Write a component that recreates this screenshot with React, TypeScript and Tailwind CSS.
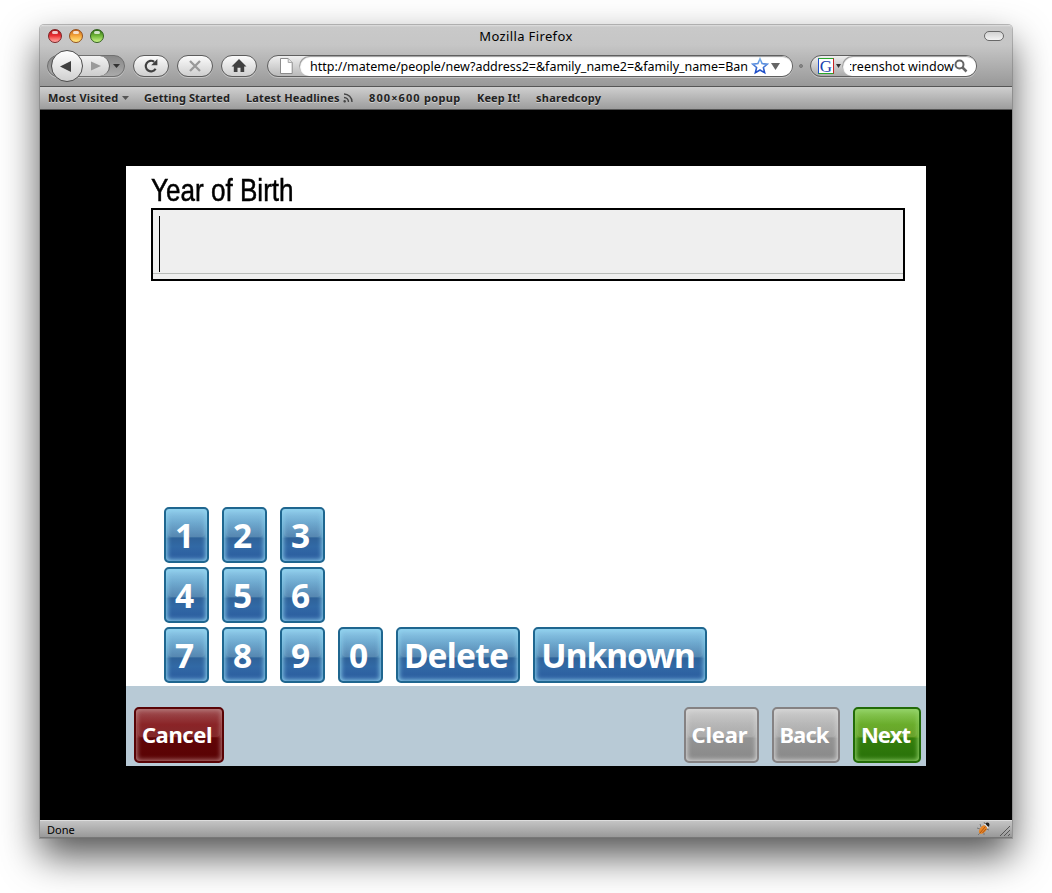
import type { ReactNode } from "react";

const tones = {
  blue: "border-[#1f668f] bg-[linear-gradient(#93cdeb_0%,#6aa8cf_25%,#4379a8_54%,#2f6299_56%,#3169a5_72%,#2b5a9f_100%)] shadow-[inset_0_0_5px_1px_#8fd3ee]",
  red: "border-[#590406] bg-[linear-gradient(#a25558_0%,#84191c_30%,#741113_54%,#600507_56%,#590304_100%)] shadow-[inset_0_0_5px_1px_#b98081]",
  gray: "border-[#858283] bg-[linear-gradient(#cfcfcf_0%,#b3b3b3_30%,#a0a0a0_54%,#939393_56%,#898989_100%)] shadow-[inset_0_0_5px_1px_#d8d8d8]",
  green: "border-[#226b08] bg-[linear-gradient(#91d063_0%,#62a820_30%,#579614_54%,#347e0c_56%,#287009_100%)] shadow-[inset_0_0_5px_1px_#94d36c]",
};

function Key({ children, tone = "blue", className }: { children: ReactNode; tone?: keyof typeof tones; className: string }) {
  return (
    <button
      className={`relative flex h-14 shrink-0 items-center justify-center rounded-[5px] border-2 font-['Noto_Sans','Open_Sans',sans-serif] font-bold whitespace-nowrap text-white ${tones[tone]} ${className}`}
    >
      <span className="absolute inset-x-[2px] top-[3px] h-[25px] rounded-[4px] bg-linear-to-b from-white/0 to-white/10" />
      <span className="relative leading-none">{children}</span>
    </button>
  );
}

function Light({ className }: { className: string }) {
  return (
    <span className={`relative size-[14px] rounded-full border ${className}`}>
      <span className="absolute top-px left-[3px] h-[3px] w-[6px] rounded-full bg-white/75 blur-[0.5px]" />
    </span>
  );
}

function ToolButton({ children }: { children: ReactNode }) {
  return (
    <button className="flex h-[22px] w-9 shrink-0 items-center justify-center rounded-full border border-[#5c5c5c] bg-linear-to-b from-[#fbfbfb] to-[#cfcfcf] shadow-[0_1px_0_#c4c4c4]">
      {children}
    </button>
  );
}

function Chrome() {
  return (
    <header className="h-[61px] shrink-0 bg-[linear-gradient(#e0e0e0_0px,#c9c9c9_2px,#c6c6c6_20px,#989898_61px)]">
      <div className="flex h-[22px] items-center pr-2 pl-2">
        <div className="flex w-[140px] gap-[7px]">
          <Light className="border-[#7d2224] bg-linear-to-b from-[#a81318] via-[#ee3238] to-[#ffa6a5]" />
          <Light className="border-[#93501c] bg-linear-to-b from-[#c8651b] via-[#f6a93c] to-[#ffeb83]" />
          <Light className="border-[#31601d] bg-linear-to-b from-[#327016] via-[#73b93b] to-[#cbf589]" />
        </div>
        <h1 className="flex-1 pt-[2px] text-center text-[13px] tracking-[0.36px]">Mozilla Firefox</h1>
        <div className="flex w-[140px] justify-end">
          <span className="h-[10px] w-5 rounded-full border border-[#686868] bg-linear-to-b from-[#d2d2d2] to-[#f3f3f3]" />
        </div>
      </div>
      <div className="flex h-[38px] items-center pl-[7px]">
        <div className="relative mr-2 flex h-[22px] w-[78px] shrink-0 items-center rounded-full border border-[#707070] bg-linear-to-b from-[#888] to-[#aaa] shadow-[0_1px_0_#c4c4c4]">
          <span className="ml-6 flex h-full w-[38px] items-center justify-center rounded-r-full border-r border-[#5c5c5c] bg-linear-to-b from-[#f2f2f2] to-[#cdcdcd] pl-[11px]">
            <svg width="10" height="10" viewBox="0 0 10 10"><path d="M0 0.5 10 5 0 9.5Z" fill="#9a9a9a" /></svg>
          </span>
          <svg className="ml-[3px]" width="7" height="4" viewBox="0 0 7 4"><path d="M0 0h7L3.5 4Z" fill="#333" /></svg>
          <span className="absolute top-[-6px] left-[3px] flex size-8 items-center justify-center rounded-full border border-[#4d4d4d] bg-linear-to-b from-white to-[#d0d0d0] pr-1">
            <svg width="11" height="11" viewBox="0 0 11 11"><path d="M11 0v11L0 5.5Z" fill="#3f3f3f" /></svg>
          </span>
        </div>
        <div className="mr-[10px] flex gap-2">
          <ToolButton>
            <svg width="16" height="16" viewBox="0 0 16 16" fill="none">
              <path d="M12.6 10.8A5.3 5.3 0 1 1 11.2 3.8" stroke="#404040" strokeWidth="2.2" />
              <path d="M14.4 1v6.2H8.2Z" fill="#404040" />
            </svg>
          </ToolButton>
          <ToolButton>
            <svg width="12" height="12" viewBox="0 0 12 12"><path d="m1 1 10 10M11 1 1 11" stroke="#999" strokeWidth="2.3" /></svg>
          </ToolButton>
          <ToolButton>
            <svg width="16" height="14" viewBox="0 0 16 14"><path d="M8 0 0.5 7.5h2.3V13h3.7V8.7h3V13h3.7V7.5h2.3Z" fill="#404040" /></svg>
          </ToolButton>
        </div>
        <div className="flex h-[22px] w-[526px] shrink-0 items-center rounded-full border border-[#5f5f5f] bg-linear-to-b from-[#efefef] to-[#b9b9b9] shadow-[0_1px_0_#c4c4c4]">
          <svg className="mr-[6px] ml-3" width="13" height="16" viewBox="0 0 13 16"><path d="M.5.5h7.7l4 4v11H.5Z" fill="#fff" stroke="#8c8c8c" /><path d="M8.2.5v4h4" fill="#e4e4e4" stroke="#a9a9a9" /></svg>
          <div className="flex h-full flex-1 items-center rounded-full bg-white pl-[11px] shadow-[inset_1px_1px_1px_#999]">
            <span className="w-[441px] pt-[2px] text-[12.5px] tracking-[-0.01px] whitespace-nowrap">http://mateme/people/new?address2=&amp;family_name2=&amp;family_name=Ban</span>
            <svg className="shrink-0" width="18" height="18" viewBox="0 0 18 18">
              <defs><linearGradient id="star" x2="0" y2="1"><stop stopColor="#7db4ea" /><stop offset="1" stopColor="#1746c5" /></linearGradient></defs>
              <path d="m9 1.8 2.1 4.8 5.3.5-4 3.4 1.2 5.2L9 13l-4.6 2.7 1.2-5.2-4-3.4 5.3-.5Z" fill="#fff" stroke="url(#star)" strokeWidth="1.6" />
            </svg>
            <svg className="ml-[2px] shrink-0" width="9" height="7" viewBox="0 0 9 7"><path d="M0 0h9L4.5 7Z" fill="#666" /></svg>
          </div>
        </div>
        <span className="mr-[7px] ml-[6px] size-[4px] shrink-0 rounded-full border border-[#777] bg-[#888]" />
        <div className="flex h-[22px] w-[167px] shrink-0 items-center rounded-full border border-[#5f5f5f] bg-linear-to-b from-[#efefef] to-[#aaa] shadow-[0_1px_0_#c4c4c4]">
          <span className="ml-[7px] flex h-4 w-4 shrink-0 items-center justify-center border border-t-[#2aa52a] border-r-[#c62222] border-b-[#2aa52a] border-l-[#1e4fd0] bg-white font-['Liberation_Serif',serif] text-[17px] leading-none text-[#1b3fae]">G</span>
          <svg className="mr-px ml-[2px] shrink-0" width="5" height="4" viewBox="0 0 5 4"><path d="M0 0h5L2.5 4Z" fill="#333" /></svg>
          <div className="flex h-full flex-1 items-center rounded-full bg-white pl-2 shadow-[inset_1px_1px_1px_#999]">
            <span className="flex w-[104px] justify-end overflow-hidden pt-[2px] text-[12.5px] tracking-[0.05px] whitespace-nowrap">screenshot window</span>
            <svg className="shrink-0" width="14" height="14" viewBox="0 0 14 14" fill="none"><circle cx="5.5" cy="5.5" r="4" stroke="#666" strokeWidth="2" /><path d="m8.5 8.5 4 4" stroke="#666" strokeWidth="2.5" /></svg>
          </div>
        </div>
      </div>
    </header>
  );
}

function Bookmarks() {
  return (
    <nav className="flex h-6 shrink-0 items-center border-t border-b border-t-[#555] border-b-[#555] bg-linear-to-b from-[#cfcfcf] to-[#9d9d9d] pl-2 text-[11px] font-bold whitespace-nowrap text-[#222] [text-shadow:0_1px_0_#d0d0d0]">
      <span className="w-[74px] tracking-[0.2px]">Most Visited</span>
      <svg className="mr-[15px]" width="7" height="4" viewBox="0 0 7 4"><path d="M0 0h7L3.5 4Z" fill="#555" /></svg>
      <span className="w-[102px] tracking-[0.07px]">Getting Started</span>
      <span className="w-[97px] tracking-[0.13px]">Latest Headlines</span>
      <svg className="mr-4" width="10" height="10" viewBox="0 0 10 10" fill="none" stroke="#444" strokeWidth="1.4"><path d="M1 1a8 8 0 0 1 8 8M1 4.5A4.5 4.5 0 0 1 5.5 9" /><circle cx="1.7" cy="8.3" r=".6" /></svg>
      <span className="w-[108px]"><span className="tracking-[1.1px]">800×600</span><span className="tracking-[0.35px]"> popup</span></span>
      <span className="w-[59px] tracking-[0.1px]">Keep It!</span>
      <span className="tracking-[0.23px]">sharedcopy</span>
    </nav>
  );
}

function Keypad() {
  return (
    <div className="flex flex-col gap-1 pl-[38px] text-[33.5px]">
      <div className="flex gap-[13px]">
        {["1", "2", "3"].map((n) => <Key key={n} className="w-[45px] pt-[2px] pr-[4px]">{n}</Key>)}
      </div>
      <div className="flex gap-[13px]">
        {["4", "5", "6"].map((n) => <Key key={n} className="w-[45px] pt-[2px] pr-[4px]">{n}</Key>)}
      </div>
      <div className="flex gap-[13px]">
        {["7", "8", "9", "0"].map((n) => <Key key={n} className="w-[45px] pt-[2px] pr-[4px]">{n}</Key>)}
        <Key className="w-[124px] pt-[2px] pr-[4px] tracking-[-0.8px]">Delete</Key>
        <Key className="w-[174px] pt-[2px] pr-[4px] tracking-[-1px]">Unknown</Key>
      </div>
    </div>
  );
}

export default function App() {
  return (
    <div className="h-[893px] w-[1052px] overflow-hidden bg-white pt-[25px] pl-10 font-['Noto_Sans','Open_Sans',sans-serif] text-black">
      <div className="flex h-[813px] w-[972px] flex-col overflow-hidden rounded-t-[4px] shadow-[0_0_0_1px_rgba(110,110,110,0.45),0_18px_38px_rgba(0,0,0,0.68)]">
        <Chrome />
        <Bookmarks />
        <main className="flex h-[710px] shrink-0 justify-center bg-black pt-[56px]">
          <div className="flex h-[600px] w-[800px] flex-col bg-white">
            <div className="flex h-[520px] flex-col justify-between pb-[3px]">
              <div className="pl-[25px]">
                <label className="mt-1 block h-[38px] w-[180px] origin-left scale-x-[0.815] font-['Liberation_Sans',Arial,sans-serif] text-[32px] leading-[40px] whitespace-nowrap [-webkit-text-stroke:0.5px_black]">Year of Birth</label>
                <div className="flex h-[73px] w-[754px] flex-col border-2 border-black bg-[#efefef]">
                  <div className="h-[64px] border-b border-[#b9bcb9] pt-[6px] pl-[6px]">
                    <div className="h-14 w-px bg-black" />
                  </div>
                </div>
              </div>
              <Keypad />
            </div>
            <footer className="flex h-20 items-start bg-[#b8cad6] pt-[21px] pr-[5px] pl-2 text-[22px]">
              <Key tone="red" className="mr-auto w-[90px] pr-[4px] pb-[2px] tracking-[-0.4px]">Cancel</Key>
              <div className="flex gap-[13px]">
                <Key tone="gray" className="w-[75px] pr-[4px] pb-[2px] tracking-[-0.2px]">Clear</Key>
                <Key tone="gray" className="w-[68px] pr-[4px] pb-[2px] tracking-[-0.9px]">Back</Key>
                <Key tone="green" className="w-[68px] pr-[3px] pb-[2px] tracking-[-0.9px]">Next</Key>
              </div>
            </footer>
          </div>
        </main>
        <footer className="flex h-[18px] shrink-0 items-center justify-between border-t border-b border-t-[#ddd] border-b-[#777] bg-linear-to-b from-[#c4c4c4] to-[#999] pl-[7px] text-[11px]">
          <span className="pt-[2px]">Done</span>
          <div className="flex items-end">
            <svg className="mr-[7px]" width="17" height="16" viewBox="0 0 17 16" fill="none">
              <path d="m5 3 1 3M2 7l3 1M3 14l2-2M9 14v-2M14 9l-3-1M9 1l1 2" stroke="#777" />
              <ellipse cx="8" cy="8.5" rx="3" ry="5.2" transform="rotate(42 8 8.5)" fill="#e98525" />
              <path d="m5 12 5-6M7.5 12l3.5-4" stroke="#9a4a12" strokeWidth=".8" />
              <circle cx="12.3" cy="3.8" r="2.2" fill="#222" />
              <path d="m9.7 3.2 3.4 3.4" stroke="#fff" strokeWidth="1.2" />
            </svg>
            <svg className="mr-px" width="12" height="12" viewBox="0 0 12 12" stroke="#555"><path d="M1 11 11 1M5 11l6-6M9 11l2-2" /></svg>
          </div>
        </footer>
      </div>
    </div>
  );
}
